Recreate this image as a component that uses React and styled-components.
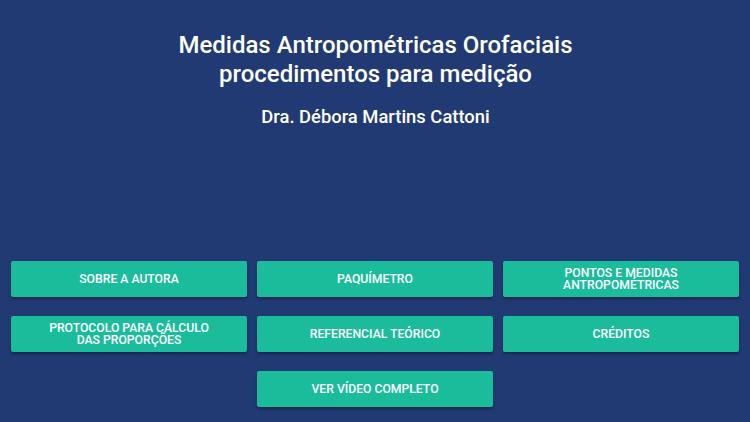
import styled, { createGlobalStyle } from 'styled-components';

const GlobalStyle = createGlobalStyle`
  html, body {
    margin: 0;
    padding: 0;
    background: #213a73;
  }
  body {
    font-family: Roboto, "Liberation Sans", sans-serif;
  }
`;

const Screen = styled.div`
  width: 750px;
  height: 422px;
  box-sizing: border-box;
  background: #213a73;
  display: flex;
  flex-direction: column;
  justify-content: space-between;
  padding: 31px 10px 15px 11px;
  color: #fff;
`;

const Header = styled.header`
  display: flex;
  flex-direction: column;
  align-items: center;
  text-align: center;
`;

const Title = styled.h1`
  margin: 0;
  font-size: 24px;
  font-weight: 500;
  line-height: 29px;
`;

const Author = styled.h2`
  margin: 17px 0 0;
  font-size: 18.4px;
  font-weight: 500;
  line-height: 22px;
`;

const Menu = styled.nav`
  display: grid;
  grid-template-columns: repeat(3, 236px);
  grid-auto-rows: 36px;
  column-gap: 10px;
  row-gap: 19px;
`;

const MenuButton = styled.button`
  grid-column: ${({ $col }) => ($col ? `${$col} / span 1` : 'auto')};
  border: none;
  border-radius: 2px;
  background: #1bbc9b;
  color: #fff;
  font-family: Roboto, "Liberation Sans", sans-serif;
  font-size: 12.2px;
  font-weight: 500;
  line-height: 12.5px;
  text-transform: uppercase;
  box-shadow: 0 2px 3px rgba(0, 0, 0, 0.35);
  cursor: pointer;
  padding: 0 8px;
`;

const items = [
  ['Sobre a autora'],
  ['Paquímetro'],
  ['Pontos e medidas', 'antropométricas'],
  ['Protocolo para cálculo', 'das proporções'],
  ['Referencial teórico'],
  ['Créditos'],
];

const App = () => {
  return (
    <>
      <GlobalStyle />
      <Screen>
        <Header>
          <Title>
            Medidas Antropométricas Orofaciais
            <br />
            procedimentos para medição
          </Title>
          <Author>Dra. Débora Martins Cattoni</Author>
        </Header>
        <Menu>
          {items.map((lines) => (
            <MenuButton key={lines[0]}>
              {lines.map((l, i) => (
                <span key={l}>
                  {i > 0 && <br />}
                  {l}
                </span>
              ))}
            </MenuButton>
          ))}
          <MenuButton $col={2}>Ver vídeo completo</MenuButton>
        </Menu>
      </Screen>
    </>
  );
};

export default App;
